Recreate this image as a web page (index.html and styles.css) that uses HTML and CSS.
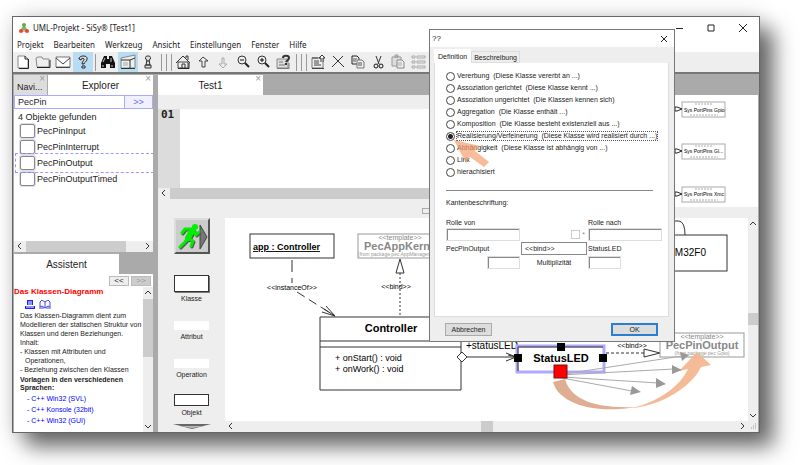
FILE: index.html
```html
<!DOCTYPE html>
<html lang="de">
<head>
    <meta charset="utf-8">
    <title>UML-Projekt - SiSy</title>
    <link rel="stylesheet" href="styles.css">
</head>
<body>
<div class="window">
    <!--Title bar-->
    <header class="titlebar">
        <svg class="logo" width="10" height="10" viewBox="0 0 10 10">
            <path d="M5 3L2 7M5 3L8 7M2 8H8" stroke="#777" fill="none"/>
            <circle cx="5" cy="2" r="2" fill="#6a4"/>
            <path d="M3 4h4v3H3z" fill="#7b5"/>
            <circle cx="2" cy="8" r="2" fill="#e43"/>
            <circle cx="8" cy="8" r="2" fill="#e43"/>
        </svg>
        <span class="title">UML-Projekt - SiSy® [Test1]</span>
        <button class="winbtn" aria-label="Minimieren"><svg width="8" height="8"><path d="M1 4.500H8"/></svg></button>
        <button class="winbtn" aria-label="Maximieren"><svg width="8" height="8"><path d="M1 1h6v6H1z"/></svg></button>
        <button class="winbtn" aria-label="Beenden"><svg width="8" height="8"><path d="M0 0L8 8M8 0L0 8"/></svg></button>
    </header>

    <!--Menu-->
    <nav class="menu">
        <a href="#">Projekt</a>
        <a href="#">Bearbeiten</a>
        <a href="#">Werkzeug</a>
        <a href="#">Ansicht</a>
        <a href="#">Einstellungen</a>
        <a href="#">Fenster</a>
        <a href="#">Hilfe</a>
    </nav>

    <!--Toolbar-->
    <div class="toolbar">
        <button aria-label="Neu"><svg viewBox="0 0 16 16"><path d="M3 2h7l3 3v9H3z" fill="#fff" stroke="#888"/><path d="M10 2v3h3M4 14.500h9.500V5" fill="none" stroke="#222"/></svg></button>
        <button aria-label="Öffnen"><svg viewBox="0 0 16 16"><path d="M1 4l2-1h4l1 2h6v8H2z" fill="#eee" stroke="#888"/><path d="M2 13.500h13V6" fill="none" stroke="#222"/></svg></button>
        <button aria-label="Senden"><svg viewBox="0 0 16 16"><path d="M1 3h14v10H1z" fill="#fff" stroke="#777"/><path d="M1 4l7 6 7-6M1 13.500h14" fill="none" stroke="#444"/></svg></button>
        <button class="on" aria-label="Hilfe"><svg viewBox="0 0 16 16"><path d="M4 5c0-4 9-4 8 0 0 3-3 3-3 5H7c0-3 3-4 2-5s-3-1-3 1z" fill="#ddd" stroke="#222"/><path d="M7 12h3v2H7z" fill="#fff" stroke="#222"/></svg></button>
        <span class="sep"></span>
        <button aria-label="Suchen"><svg viewBox="0 0 16 16"><path d="M4 2h3v3h2V2h3l3 7v5h-5v-4H6v4H1V9z" fill="#111"/><path d="M3 11v2M5 4L3 8M12 11v2M11 4v4" stroke="#ccc"/></svg></button>
        <button class="on" aria-label="Ansicht"><svg viewBox="0 0 16 16"><path d="M1 4L15 1V14H1Z" fill="#eee" stroke="#888"/><path d="M1 6H10M10 6L15 4M10 6V14M1 14.500H15" fill="none" stroke="#333"/><path d="M3 8h5v4H3z" fill="#ccc"/></svg></button>
        <button aria-label="Modell"><svg viewBox="0 0 16 16"><path d="M8 2a2 2 0 011 4l1 5H6l1-5a2 2 0 011-4zM5 11h6v3H5zM6 7h4" fill="#ddd" stroke="#333"/></svg></button>
        <span class="seps"></span>
        <button aria-label="Start"><svg viewBox="0 0 16 16"><path d="M3 8h10v6H3z" fill="#eee" stroke="#444"/><path d="M1 9l7-7 7 7M11 4V2h2v4M7 14v-4h3v4" fill="none" stroke="#333"/><path d="M3 14.500h11V9" fill="none" stroke="#222"/></svg></button>
        <button aria-label="Hoch"><svg viewBox="0 0 16 16"><path d="M8 3l5 4h-3v6H7V7H4z" fill="#eee" stroke="#444"/></svg></button>
        <button aria-label="Runter"><svg viewBox="0 0 16 16"><path d="M8 14l4-4h-3V4H7v6H4z" fill="#eee" stroke="#aaa"/></svg></button>
        <button aria-label="Verkleinern"><svg viewBox="0 0 16 16"><circle cx="7" cy="6" r="4" fill="#eee" stroke="#333"/><path d="M5 6h4" stroke="#111"/><path d="M10 9l4 4" stroke="#222" stroke-width="2"/></svg></button>
        <button aria-label="Vergrößern"><svg viewBox="0 0 16 16"><circle cx="7" cy="6" r="4" fill="#eee" stroke="#333"/><path d="M5 6h4M7 4v4" stroke="#111"/><path d="M10 9l4 4" stroke="#222" stroke-width="2"/></svg></button>
        <button aria-label="Info"><svg viewBox="0 0 16 16"><path d="M2 5h11v9H2z" fill="#ddd" stroke="#888"/><path d="M2 14.500h12V9M4 8h4M4 11h6" stroke="#777" fill="none"/><path d="M8 4c0-3 6-3 6 0 0 2-2 2-3 4M11 9v2" stroke="#333" stroke-width="2" fill="none"/></svg></button>
        <span class="seps"></span>
        <button aria-label="Eigenschaften"><svg viewBox="0 0 16 16"><path d="M2 4h11v10H2z" fill="#eee" stroke="#777"/><path d="M2 4h6M4 7h5M4 9h5M4 11h7M2 14.500h12" stroke="#444"/><path d="M11 8V4H9l3-3 3 3h-2v4" fill="#fff" stroke="#333"/></svg></button>
        <button aria-label="Löschen"><svg viewBox="0 0 16 16"><path d="M3 2l11 11M13 2L2 13" stroke="#333" fill="none"/></svg></button>
        <button aria-label="Kopieren"><svg viewBox="0 0 16 16"><path d="M2 2h5l2 2v6H2z" fill="#eee" stroke="#222"/><path d="M7 6h5l2 2v6H7z" fill="#eee" stroke="#777"/><path d="M3 5h4M3 7h3M8 9h4M8 11h4" stroke="#555"/></svg></button>
        <button aria-label="Ausschneiden"><svg viewBox="0 0 16 16"><path d="M6 2l3 8M11 2L8 10" stroke="#333" fill="none"/><circle cx="6" cy="12" r="2" fill="none" stroke="#111"/><circle cx="11" cy="12" r="2" fill="none" stroke="#111"/></svg></button>
        <button aria-label="Einfügen"><svg viewBox="0 0 16 16"><path d="M2 3h9v9H2zM5 1h3v2H5z" fill="#ddd" stroke="#999"/><path d="M7 6h5l2 2v6H7z" fill="#eee" stroke="#888"/><path d="M8 9h4M8 11h4" stroke="#aaa"/></svg></button>
        <button aria-label="Liste"><svg viewBox="0 0 16 16"><path d="M2 2h3v2H2zM2 7h3v2H2zM2 12h3v2H2zM7 2h8v2H7zM7 7h8v2H7zM7 12h8v2H7z" fill="#eee" stroke="#aaa"/></svg></button>
    </div>

    <div class="main">
        <!--Left side-->
        <aside class="side">
            <div class="tabs">
                <button class="tab navi">Navi...<i>×</i></button>
                <button class="tab active grow">Explorer<i>×</i></button>
            </div>
            <form class="search">
                <input type="text" value="PecPin" aria-label="Suche">
                <button type="button">&gt;&gt;</button>
            </form>
            <div class="tree">
                <p>4 Objekte gefunden</p>
                <label><input type="checkbox">PecPinInput</label>
                <label><input type="checkbox">PecPinInterrupt</label>
                <label class="selected"><input type="checkbox">PecPinOutput</label>
                <label><input type="checkbox">PecPinOutputTimed</label>
            </div>
            <div class="hscroll">
                <svg width="12" height="11"><path d="M7 2L4 5L7 8"/></svg>
                <span class="thumb tree-thumb"></span>
                <svg width="12" height="11"><path d="M5 2L8 5L5 8"/></svg>
            </div>
            <div class="tabs assist-tabs">
                <button class="tab active assist-tab">Assistent</button>
            </div>
            <div class="assist">
                <div class="pager">
                    <button>&lt;&lt;</button>
                    <button disabled>&gt;&gt;</button>
                </div>
                <div class="assist-body">
                    <div class="doc">
                        <h3>Das Klassen-Diagramm</h3>
                        <div class="doc-icons">
                            <svg width="10" height="9" viewBox="0 0 10 9"><path d="M2 0h6v5H2zM0 6h10v3H0z" fill="#22e"/><path d="M3 2h4M3 4h4M1 7h8" stroke="#fff"/></svg>
                            <svg width="12" height="9" viewBox="0 0 12 9"><path d="M1 2L3 0L6 2L9 0L11 2V7L9 6L6 8L3 6L1 7ZM6 2V8M0 8H5M7 8H12" fill="none" stroke="#44e"/></svg>
                        </div>
                        <p>Das Klassen-Diagramm dient zum<br>Modellieren der statischen Struktur von<br>Klassen und deren Beziehungen.<br>Inhalt:</p>
                        <ul>
                            <li>Klassen mit Attributen und<br>Operationen,</li>
                            <li>Beziehung zwischen den Klassen</li>
                        </ul>
                        <h4>Vorlagen in den verschiedenen<br>Sprachen:</h4>
                        <div class="links">
                            <a href="#">- C++ Win32 (SVL)</a>
                            <a href="#">- C++ Konsole (32bit)</a>
                            <a href="#">- C++ Win32 (GUI)</a>
                        </div>
                    </div>
                    <div class="vscroll">
                        <svg width="10" height="12"><path d="M2 7L5 4L8 7"/></svg>
                        <span class="thumb assist-thumb"></span>
                        <svg class="last" width="10" height="12"><path d="M2 5L5 8L8 5"/></svg>
                    </div>
                </div>
            </div>
        </aside>

        <!--Work area-->
        <section class="work">
            <div class="tabs">
                <button class="tab active test-tab">Test1<i>×</i></button>
            </div>
            <div class="upper">
                <div class="editor">
                    <div class="code"><span class="lineno">01</span></div>
                    <div class="hscroll">
                        <svg width="12" height="11"><path d="M7 2L4 5L7 8"/></svg>
                        <span class="thumb grow"></span>
                    </div>
                </div>
                <div class="overview">
                    <svg width="110" height="112" viewBox="649 95 110 112">
                        <g fill="#fff" stroke="#aaa">
                            <rect x="683" y="102" width="43" height="15"/>
                            <rect x="683" y="144" width="43" height="15"/>
                            <rect x="683" y="187" width="43" height="15"/>
                        </g>
                        <path d="M696 104H713M691 115H719M696 146H713M691 157H719M696 189H713M691 200H719" stroke="#aaa" stroke-dasharray="2 1"/>
                        <path d="M676 107h2l5 2-5 2h-2zM676 149h2l5 2-5 2h-2zM676 192h2l5 2-5 2h-2z" fill="#fff" stroke="#222"/>
                        <g class="mini">
                            <text x="685" y="112">Sys PortPins Gpio</text>
                            <text x="685" y="153">Sys PortPins Gl...</text>
                            <text x="685" y="196">Sys PortPins Xmc</text>
                        </g>
                    </svg>
                </div>
            </div>
            <div class="splitter"><span></span></div>
            <div class="lower">
                <div class="palette">
                    <button class="run" aria-label="Ausführen">
                        <svg width="32" height="32" viewBox="0 0 32 32">
                            <path d="M24 5L31 17L24 29Z" fill="#777" stroke="#444"/>
                            <g stroke="#555" fill="none" stroke-linecap="round" stroke-linejoin="round" transform="translate(1 1)">
                                <path d="M16 11L12 18" stroke-width="6"/>
                                <path d="M12 18L17 21L15 26M12 18L9 22L4 27M16 9L9 9L6 13M18 11L20 15L23 12" stroke-width="3"/>
                            </g>
                            <g stroke="#0e0" fill="none" stroke-linecap="round" stroke-linejoin="round">
                                <path d="M16 11L12 18" stroke-width="6"/>
                                <path d="M12 18L17 21L15 26M12 18L9 22L4 27M16 9L9 9L6 13M18 11L20 15L23 12" stroke-width="3"/>
                            </g>
                            <circle cx="19" cy="7" r="3" fill="#0e0"/>
                        </svg>
                    </button>
                    <button class="item"><span class="shape klasse"></span>Klasse</button>
                    <button class="item"><span class="shape"></span>Attribut</button>
                    <button class="item"><span class="shape"></span>Operation</button>
                    <button class="item"><span class="shape objekt"></span>Objekt</button>
                    <svg class="more" width="38" height="5"><path d="M0 0H38L19 5Z" fill="#666"/><path d="M7 2H31L19 4Z" fill="#bbb"/></svg>
                </div>
                <div class="board">
                    <div class="board-row">
                        <div class="canvas">
                            <svg width="523" height="203" viewBox="225 218 523 203">
                                <!--app : Controller-->
                                <rect class="box" x="250" y="234" width="84" height="24"/>
                                <text class="b9 under" x="253" y="250">app : Controller</text>
                                <path class="line" d="M292 260V283" stroke-dasharray="12 6"/>
                                <path class="line" d="M297 292L335 316" stroke-dasharray="9 5"/>
                                <path class="line" d="M322 312L335 316L326 306M335 316L324 309"/>
                                <text class="t7" x="292" y="290" text-anchor="middle">&lt;&lt;instanceOf&gt;&gt;</text>
                                <!--PecAppKernel-->
                                <rect class="box grey" x="358" y="234" width="85" height="24"/>
                                <text class="t7 g" x="400" y="240" text-anchor="middle">&lt;&lt;template&gt;&gt;</text>
                                <text class="b11 g" x="364" y="250">PecAppKernel</text>
                                <text class="t5" x="358" y="256">(from package pec  AppManagement)</text>
                                <path class="line" d="M400 273V317" stroke-dasharray="2 2"/>
                                <path class="box" d="M400 259L404 273H396Z"/>
                                <text class="t7" x="396" y="289" text-anchor="middle">&lt;&lt;bind&gt;&gt;</text>
                                <!--Controller-->
                                <path class="box" d="M320 317H461V390H320ZM320 341H461M320 347H461"/>
                                <text class="b11" x="391" y="332" text-anchor="middle">Controller</text>
                                <text class="t9" x="335" y="361">+ onStart() : void</text>
                                <text class="t9" x="335" y="372">+ onWork() : void</text>
                                <path class="line" d="M467 357H516M506 353L516 357L506 361M508 355L516 357"/>
                                <path class="box" d="M457 357L462 352L467 357L462 362Z"/>
                                <text class="t10" x="466" y="349">+statusLED</text>
                                <!--StatusLED-->
                                <rect x="517" y="346" width="87" height="26" fill="#fff" stroke="#aaf" stroke-width="3"/>
                                <path class="line" d="M518 371V347H603"/>
                                <text class="b11" x="561" y="362" text-anchor="middle">StatusLED</text>
                                <path class="line" d="M606 353H644" stroke-dasharray="3 2"/>
                                <path class="box" d="M644 349L660 353L644 357Z"/>
                                <text class="t7" x="632" y="348" text-anchor="middle">&lt;&lt;bind&gt;&gt;</text>
                                <!--PecPinOutput-->
                                <rect class="box grey" x="660" y="333" width="84" height="24"/>
                                <text class="t7 g" x="702" y="339" text-anchor="middle">&lt;&lt;template&gt;&gt;</text>
                                <text class="b11 g" x="702" y="349" text-anchor="middle">PecPinOutput</text>
                                <text class="t5" x="702" y="355" text-anchor="middle">(from package pec  Gpio)</text>
                                <!--Package-->
                                <path class="box" d="M640 235V221H679Q685 222 685 235"/>
                                <rect class="box" x="640" y="235" width="87" height="36"/>
                                <text class="t10" x="706" y="256" text-anchor="end">STM32F0</text>
                                <!--Drag arrows-->
                                <path d="M553 382C558 401 588 415 637 407C590 409 570 397 565 379Z" fill="#dfae92"/>
                                <path d="M632 408C660 406 692 387 701 367L711 365L697 352L679 371L688 369C681 384 662 401 632 408Z" fill="#f4b48c" fill-opacity="0.900"/>
                                <path d="M564 374L682 356M560 375L674 369M562 377L658 383M562 378L632 391" stroke="#aaa" fill="none"/>
                                <path d="M680 352L689 355L682 361ZM672 365L682 370L672 374ZM656 378L666 384L656 388ZM632 386L641 392L630 395Z" fill="#999"/>
                                <rect x="554" y="365" width="13" height="13" fill="#f00" stroke="#711"/>
                                <path d="M514 354h8v8h-8zM557 343h8v8h-8zM599 354h8v8h-8z" fill="#000"/>
                            </svg>
                        </div>
                        <div class="vscroll">
                            <svg width="10" height="12"><path d="M2 7L5 4L8 7"/></svg>
                            <span class="thumb board-vthumb"></span>
                            <svg class="last" width="10" height="12"><path d="M2 5L5 8L8 5"/></svg>
                        </div>
                    </div>
                    <div class="hscroll">
                        <svg width="12" height="11"><path d="M7 2L4 5L7 8"/></svg>
                        <span class="thumb board-hthumb"></span>
                        <svg class="last" width="12" height="11"><path d="M5 2L8 5L5 8"/></svg>
                        <svg class="grip" width="10" height="11"><path d="M7 3h1M5 5h1M7 5h1M3 7h1M5 7h1M7 7h1"/></svg>
                    </div>
                </div>
            </div>
        </section>
    </div>

    <!--Dialog-->
    <form class="dialog">
        <div class="dialog-title">
            <span>??</span>
            <button type="button" class="winbtn" aria-label="Schließen"><svg width="8" height="8"><path d="M1 1L7 7M7 1L1 7"/></svg></button>
        </div>
        <div class="dialog-tabs">
            <button type="button" class="current">Definition</button>
            <button type="button">Beschreibung</button>
        </div>
        <div class="panel">
            <div class="radios">
                <label><input type="radio" name="art"><span>Vererbung  (Diese Klasse vererbt an ...)</span></label>
                <label><input type="radio" name="art"><span>Assoziation gerichtet  (Diese Klasse kennt ...)</span></label>
                <label><input type="radio" name="art"><span>Assoziation ungerichtet  (Die Klassen kennen sich)</span></label>
                <label><input type="radio" name="art"><span>Aggregation  (Die Klasse enthält ...)</span></label>
                <label><input type="radio" name="art"><span>Komposition  (Die Klasse besteht existenziell aus ...)</span></label>
                <label class="focus"><input type="radio" name="art" checked><span>Realisierung/Verfeinerung  (Diese Klasse wird realisiert durch ...)</span></label>
                <label><input type="radio" name="art"><span>Abhängigkeit  (Diese Klasse ist abhängig von ...)</span></label>
                <label><input type="radio" name="art"><span>Link</span></label>
                <label><input type="radio" name="art"><span>hierachisiert</span></label>
                <svg class="pointer" width="36" height="28"><path d="M0 0L26 6L21 11L35 22L30 27L16 17L12 23Z" fill="#f4a070" fill-opacity="0.700"/></svg>
            </div>
            <hr>
            <p class="caption">Kantenbeschriftung:</p>
            <div class="fields">
                <label for="rolleVon">Rolle von</label>
                <span></span>
                <label for="rolleNach">Rolle nach</label>
                <input type="text" id="rolleVon">
                <label class="star"><input type="checkbox" disabled>*</label>
                <input type="text" id="rolleNach">
                <span>PecPinOutput</span>
                <input type="text" class="bind" value="&lt;&lt;bind&gt;&gt;" aria-label="Name">
                <span>StatusLED</span>
                <input type="text" class="small right" id="multVon" aria-label="Multiplizität von">
                <label class="mid" for="multNach">Multiplizität</label>
                <input type="text" class="small" id="multNach">
            </div>
        </div>
        <div class="actions">
            <button type="button">Abbrechen</button>
            <button type="button" class="ok">OK</button>
        </div>
    </form>
</div>
</body>
</html>
```
FILE: styles.css
```css
* {
    box-sizing: border-box;
}
body {
    margin: 0;
    padding: 16px 40px 32px 12px;
    min-height: 100vh;
    display: flex;
    background: #fff;
    font-family: "Liberation Sans", Arial, sans-serif;
    font-size: 10px;
    color: #222;
}
button, input {
    font: inherit;
    color: inherit;
    margin: 0;
    padding: 0;
    border: none;
    background: none;
}
p, h3, h4, ul {
    margin: 0;
    padding: 0;
}
a {
    color: inherit;
    text-decoration: none;
}
svg {
    display: block;
    flex: none;
}
.grow {
    flex: 1;
}
.window {
    position: relative;
    flex: 1;
    min-width: 0;
    display: flex;
    flex-direction: column;
    border: 1px solid #666;
    background: #fff;
    box-shadow: 14px 14px 20px rgba(0,0,0,0.55), 2px 2px 20px rgba(0,0,0,0.2);
}

/* title, menu, toolbar */
.titlebar {
    display: flex;
    align-items: center;
    height: 21px;
    padding-left: 6px;
    font-family: "Noto Sans", sans-serif;
    font-size: 8px;
}
.title {
    flex: 1;
    padding-left: 4px;
}
.winbtn {
    width: 32px;
    display: flex;
    justify-content: center;
}
.winbtn path {
    fill: none;
    stroke: #222;
}
.menu {
    display: flex;
    gap: 10px;
    height: 14px;
    padding-left: 4px;
    line-height: 14px;
    font-family: "Noto Sans", sans-serif;
    font-size: 8px;
}
.toolbar {
    display: flex;
    align-items: center;
    height: 22px;
    background: #eee;
    border-bottom: 2px solid #777;
}
.toolbar button {
    width: 20px;
    height: 20px;
    display: flex;
    align-items: center;
    justify-content: center;
}
.toolbar button svg {
    width: 16px;
    height: 16px;
}
.toolbar .on {
    background: #b9dcf5;
}
.sep {
    width: 5px;
    height: 17px;
    border-left: 1px solid #999;
    margin-left: 2px;
    margin-right: -2px;
}
.seps {
    width: 15px;
    height: 17px;
    background: repeating-linear-gradient(to right, transparent 0 3px, #999 3px 4px, transparent 4px 5px);
}

/* columns */
.main {
    flex: 1;
    display: flex;
    min-height: 0;
    padding: 1px 1px 0 1px;
    background: #aaa;
}
.side {
    width: 139px;
    flex: none;
    display: flex;
    flex-direction: column;
    margin-right: 5px;
}
.work {
    flex: 1;
    min-width: 0;
    display: flex;
    flex-direction: column;
}
.tabs {
    display: flex;
    height: 20px;
    flex: none;
}
.tab {
    position: relative;
    background: #ddd;
}
.tab.active {
    background: #fff;
}
.tab i {
    position: absolute;
    top: 0;
    right: 2px;
    font-style: normal;
    font-size: 10px;
    line-height: 8px;
    color: #999;
}
.navi {
    width: 33px;
    margin-right: 1px;
    padding: 4px 3px 0;
    text-align: left;
    font-size: 9px;
}
.assist-tab, .test-tab {
    width: 105px;
}

/* explorer */
.search {
    display: flex;
    height: 14px;
    flex: none;
    border: 1px solid #aaf;
    background: #fff;
    font-size: 9px;
}
.search input {
    flex: 1;
    min-width: 0;
    padding-left: 3px;
}
.search button {
    width: 28px;
    border-left: 1px solid #aaf;
    background: #f0f0ff;
    color: #66f;
}
.tree {
    flex: none;
    height: 132px;
    background: #fff;
    overflow: hidden;
    font-size: 9px;
}
.tree p {
    padding: 2px 4px 0;
    line-height: 12px;
}
.tree label {
    display: flex;
    align-items: center;
    gap: 2px;
    height: 16px;
    padding-left: 6px;
}
.tree input {
    appearance: none;
    width: 15px;
    height: 14px;
    border: 1px solid #888;
    border-radius: 2px;
    background: #fff;
    box-shadow: 0 0 0 1px #dde;
}
.tree .selected {
    outline: 1px dashed #99f;
    outline-offset: 1px;
    margin: 0 1px 0 3px;
    padding-left: 3px;
}
.hscroll, .vscroll {
    display: flex;
    flex: none;
    background: #eee;
}
.hscroll {
    height: 11px;
}
.vscroll {
    width: 10px;
    flex-direction: column;
}
.hscroll path, .vscroll path {
    fill: none;
    stroke: #333;
}
.thumb {
    background: #ccc;
}
.tree-thumb {
    width: 100px;
    margin-right: auto;
}

/* assistant */
.assist-tabs {
    margin-top: 2px;
}
.assist {
    flex: 1;
    min-height: 0;
    display: flex;
    flex-direction: column;
    background: #fff;
}
.pager {
    display: flex;
    justify-content: flex-end;
    gap: 2px;
    padding: 2px 2px 1px;
}
.pager button {
    width: 20px;
    height: 10px;
    border: 1px solid #bbb;
    background: #eee;
    font-size: 8px;
    line-height: 8px;
}
.pager button:disabled {
    background: #ccc;
    color: #999;
}
.assist-body {
    flex: 1;
    min-height: 0;
    display: flex;
}
.doc {
    flex: 1;
    height: 143px;
    overflow: hidden;
    font-size: 7px;
    line-height: 9px;
    white-space: nowrap;
}
.doc h3 {
    font-size: 8px;
    line-height: 10px;
    color: #f00;
}
.doc-icons {
    display: flex;
    gap: 4px;
    padding: 3px 11px 2px;
}
.doc p, .doc ul, .doc h4 {
    padding-left: 6px;
}
.doc ul {
    list-style: none;
}
.doc li {
    padding-left: 5px;
    text-indent: -5px;
}
.doc li::before {
    content: "- ";
}
.doc h4 {
    font-size: 7px;
    line-height: 8px;
    padding-top: 2px;
}
.links {
    display: flex;
    flex-direction: column;
    padding: 1px 13px;
    line-height: 11px;
    color: #00f;
}
.assist-thumb {
    height: 58px;
}
.vscroll .last {
    margin-top: auto;
}
.hscroll .last {
    margin-left: auto;
}

/* editor and overview */
.upper {
    display: flex;
    height: 112px;
    flex: none;
    background: #eee;
}
.editor {
    flex: 1;
    min-width: 0;
    padding-top: 14px;
    display: flex;
    flex-direction: column;
}
.code {
    height: 79px;
    display: flex;
    background: #fff;
}
.lineno {
    width: 22px;
    padding-left: 3px;
    background: #dcdcdc;
    font: bold 11px/11px "DejaVu Sans Mono", monospace;
}
.overview {
    width: 110px;
    overflow: hidden;
    background: #fff;
}
.mini {
    font-size: 5px;
}
.splitter {
    height: 11px;
    flex: none;
    background: #eee;
    padding: 1px 0 0 264px;
}
.splitter span {
    display: block;
    width: 12px;
    height: 6px;
    border: 1px solid #aaa;
}

/* palette and diagram */
.lower {
    flex: 1;
    min-height: 0;
    display: flex;
    background: #eee;
}
.palette {
    width: 67px;
    flex: none;
    display: flex;
    flex-direction: column;
    align-items: center;
}
.run {
    width: 36px;
    height: 36px;
    margin-bottom: 11px;
    background: #ccc;
    border: 2px solid #ddd;
    border-right-color: #555;
    border-bottom-color: #555;
}
.item {
    height: 38px;
    display: flex;
    flex-direction: column;
    align-items: center;
    justify-content: flex-end;
    gap: 2px;
    font-size: 7px;
    line-height: 9px;
}
.shape {
    width: 35px;
    height: 9px;
    background: #fff;
}
.klasse {
    height: 17px;
    border: 1px solid #333;
    box-shadow: 1px 1px 0 #777;
}
.objekt {
    height: 12px;
    border: 1px solid #333;
}
.more {
    margin-top: 7px;
}
.board {
    flex: 1;
    min-width: 0;
    display: flex;
    flex-direction: column;
}
.board-row {
    flex: 1;
    min-height: 0;
    display: flex;
}
.canvas {
    flex: 1;
    min-width: 0;
    overflow: hidden;
    background: #fff;
}
.box {
    fill: #fff;
    stroke: #333;
}
.line {
    fill: none;
    stroke: #333;
}
.grey {
    stroke: #999;
}
.t5 {
    font-size: 5px;
    fill: #999;
}
.t7 {
    font-size: 7px;
}
.t9 {
    font-size: 9px;
}
.t10 {
    font-size: 10px;
}
.b9, .b11 {
    font-size: 9px;
    font-weight: bold;
}
.b11 {
    font-size: 11px;
}
.g {
    fill: #888;
}
.under {
    text-decoration: underline;
}
.board-vthumb {
    height: 12px;
    margin-top: 83px;
}
.board-hthumb {
    width: 12px;
    margin-left: 244px;
}
.hscroll .grip path {
    stroke: #999;
}

/* dialog */
.dialog {
    position: absolute;
    top: 12px;
    left: 416px;
    width: 246px;
    border: 1px solid #777;
    background: #eee;
    font-size: 7px;
}
.dialog-title {
    display: flex;
    align-items: center;
    justify-content: space-between;
    height: 17px;
    padding-left: 2px;
    background: #fff;
    font-size: 8px;
}
.dialog-title .winbtn {
    width: 20px;
}
.dialog-tabs {
    display: flex;
    align-items: flex-end;
    height: 16px;
    padding-left: 4px;
}
.dialog-tabs button {
    height: 12px;
    padding: 0 2px;
    border: 1px solid #ddd;
}
.dialog-tabs .current {
    height: 14px;
    padding: 0 4px;
    background: #fff;
    border: none;
}
.panel {
    margin: 0 5px 0 4px;
    height: 254px;
    padding: 7px 7px 0 11px;
    background: #fff;
    border: 1px solid #ddd;
    border-top: none;
}
.radios {
    position: relative;
}
.radios label {
    display: flex;
    align-items: center;
    gap: 2px;
    height: 12px;
    line-height: 8px;
    white-space: pre;
}
.radios input {
    appearance: none;
    width: 9px;
    height: 9px;
    border: 1px solid #444;
    border-radius: 50%;
    background: #fff;
}
.radios input:checked {
    background: radial-gradient(circle, #222 0 2px, #fff 3px);
}
.radios .focus span {
    outline: 1px dotted #555;
}
.pointer {
    position: absolute;
    left: 8px;
    top: 70px;
}
hr {
    margin: 12px 8px 7px 0;
    border: none;
    border-top: 1px solid #888;
}
.caption {
    line-height: 9px;
}
.fields {
    display: grid;
    grid-template-columns: 74px 66px 74px;
    grid-template-rows: 10px 13px 13px 13px;
    gap: 1px;
    padding-top: 10px;
    align-items: center;
}
.fields input {
    width: 100%;
    height: 13px;
    border: 1px solid #ddd;
    background: #fff;
    box-shadow: inset 1px 1px 0 #888;
}
.fields .bind {
    padding-left: 3px;
    border: 1px solid #888;
    box-shadow: none;
}
.fields .small {
    width: 33px;
}
.fields .right {
    justify-self: end;
}
.mid {
    text-align: center;
}
.star {
    display: flex;
    align-items: center;
    justify-content: flex-end;
    gap: 2px;
    padding-right: 2px;
    color: #888;
}
.fields .star input {
    appearance: none;
    width: 9px;
    height: 9px;
    border: 1px solid #ccc;
    box-shadow: none;
}
.actions {
    display: flex;
    justify-content: space-between;
    padding: 6px 16px 5px 15px;
}
.actions button {
    width: 47px;
    height: 13px;
    border: 1px solid #aaa;
    background: #ddd;
}
.actions .ok {
    border: 2px solid #2a7fd0;
}
```
